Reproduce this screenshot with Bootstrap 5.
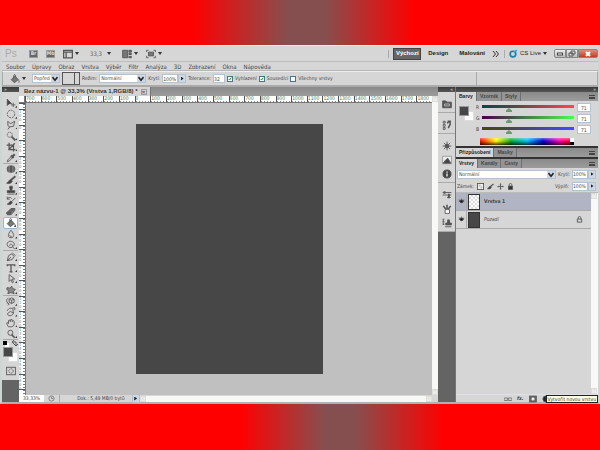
<!DOCTYPE html>
<html lang="cs">
<head>
<meta charset="utf-8">
<meta name="viewport" content="width=device-width, initial-scale=1">
<title>Bez názvu-1</title>
<link href="https://cdn.jsdelivr.net/npm/bootstrap@5.3.0/dist/css/bootstrap.min.css" rel="stylesheet">
<style>
body{font-family:"DejaVu Sans Condensed","DejaVu Sans",sans-serif;font-size:5px;line-height:7px;color:#444;background:#f00}
button,input,select{font:inherit;color:inherit;border:0;padding:0;margin:0;background:none;border-radius:0}
button{display:flex;align-items:center;justify-content:center}
a{color:inherit;text-decoration:none}
svg{display:block;flex:none}
.fill{min-width:0}
.g2{gap:2px}
.ic{width:10px;height:10px;fill:none;stroke:#555;stroke-width:1.4}
.ic-s{width:7px;height:7px}
.caret-dn{width:4px;height:3px;background:#333;clip-path:polygon(0 0,100% 0,50% 100%)}
.band{height:45px;background:linear-gradient(90deg,#f00 32%,#864f4f 48%,#864f4f 54%,#f00 69%)}
.band-b{height:46px;background:linear-gradient(90deg,#f00 40%,#864f4f 54%,#864f4f 59%,#f00 74%)}
.shell{background:#d6d6d6;border:2px solid #d0d4d4;border-top:1px solid #ececec;border-bottom:2px solid #a9b5b5}
.bar-title{height:16px;font-size:6px;border-bottom:1px solid #bdbdbd}
.ps{font-family:"Liberation Sans",sans-serif;font-size:10px;color:#aaa;width:23px;padding-left:3px}
.bx{width:9px;height:8px;background:#666;color:#ddd;font-size:5px;font-weight:bold;border:1px solid #999}
.t-tools{gap:8px}
.zoomlvl{margin:0 3px;gap:5px;color:#666}
.spaces{font-family:"Liberation Sans",sans-serif;font-weight:bold;color:#222}
.spaces .flat{margin-left:7px}
.space-on{background:#666;color:#fff;height:12px;width:28px;border:1px solid #444}
.vline{width:1px;align-self:stretch;margin:2px 0;background:#aaa}
.wbtn{height:9px;border:1px solid #888;background:linear-gradient(#eee,#bbb)}
.w1{width:12px;border-radius:2px 0 0 2px;margin-left:7px}.w2{width:12px}.w3{width:20px;background:linear-gradient(#e58b78,#c53c20);border-radius:0 2px 2px 0}
.bar-menu{height:9px;font-size:6px;gap:7px;padding-left:4px;border-bottom:1px solid #b5b5b5}
.bar-opt{height:16px;border:1px solid #aaa;border-top-color:#eee;border-bottom:2px solid #aaa;gap:2px;padding-left:7px}
.optend{width:118px}
.field{background:#fff;border:1px solid #b4c2cf;height:9px;color:#2e4f4a;line-height:7px}
.pick{appearance:none;padding:0 9px 0 1px;background:#fff url("data:image/svg+xml,%3Csvg xmlns='http://www.w3.org/2000/svg' viewBox='0 0 8 8'%3E%3Crect width='8' height='8' fill='%23ccd8e6'/%3E%3Cpath d='M1.5 2.5 4 5.5 6.500 2.500' fill='none' stroke='%23222' stroke-width='1.500'/%3E%3C/svg%3E") no-repeat right center/8px 8px}
.w28{width:28px}.w47{width:47px}.w17{width:16px}.w12{width:12px}
.step{width:8px;height:9px;background:#ccd8e6;border:1px solid #b4c2cf}
.step::after{content:"";width:3px;height:4px;background:#222;clip-path:polygon(0 0,100% 50%,0 100%)}
.tick{appearance:none;width:6px;height:6px;border:1px solid #4d7185;background:#fff}
.tick:checked{background:#fff url("data:image/svg+xml,%3Csvg xmlns='http://www.w3.org/2000/svg' viewBox='0 0 6 6'%3E%3Cpath d='M1 3 2.500 4.500 5 1' fill='none' stroke='%231a9a2a' stroke-width='1.500'/%3E%3C/svg%3E") center/4px 4px no-repeat}
.swatch-opt{width:18px;height:13px;border:1px solid #555}
.swatch-opt i{width:5px;border-left:1px solid #555}
.darkcol{background:#646464;width:17px}
.head{height:5px;background:linear-gradient(#3a3a3a,#555);color:#ddd;font-size:5px;line-height:4px;padding:0 2px}
.toolbox{height:288px;background:#d6d6d6;padding:6px 1px 0}
.tg{border-bottom:1px solid #aaa}
.tg button{flex:1;width:15px;position:relative;min-height:0}
.tg button::after{content:"";position:absolute;right:1px;bottom:1px;width:2px;height:2px;background:#333;clip-path:polygon(100% 0,100% 100%,0 100%)}
.tg .on{background:#fff;border:1px solid #9fb4c4;border-radius:2px}
.tg1{height:66px}.tg2{height:87px}.tg3{height:45px}.tg4{height:44px}
.fgbg{width:15px;height:15px;display:grid;grid-template:repeat(3,5px)/repeat(3,5px)}
.fgbg i{border:1px solid #999}
.fgbg .fg{grid-area:1/1/3/3;background:#474747;z-index:1}
.fgbg .bgc{grid-area:2/2/4/4;background:#fff;border-color:#ddd}
.tabstrip{background:linear-gradient(#8a8a8a,#9c9c9c)}
.doctabs{height:9px}
.doctab{background:#d3d3d3;font-family:"Liberation Sans",sans-serif;font-size:6px;font-weight:bold;padding:0 3px 0 5px;gap:3px;color:#333;border-right:1px solid #777}
.closebx{width:6px;height:6px;border:1px solid #999;line-height:4px;color:#555}
.rh{height:7px;background:#fff;border-bottom:1px solid #777}
.corner{width:6px;border-right:1px solid #777}
.rh span{flex:1 1 0;min-width:0;border-left:1px solid #555;color:#4c7a55;line-height:5px;overflow:hidden;background:repeating-linear-gradient(90deg,#888 0 1px,transparent 1px 3px) left bottom/100% 1px no-repeat}
.rv{width:7px;background:#fff;border-right:1px solid #777;font-size:4px}
.rv span{flex:1 1 0;min-height:0;border-top:1px solid #555;color:#4c8a70;line-height:4px;width:6px;overflow:hidden;word-break:break-all;background:repeating-linear-gradient(#777 0 1px,transparent 1px 3px) right top/2px 100% no-repeat}
.rv b{font-weight:normal;width:3px;display:block}
.rv .part{flex:0 0 6px}
.stage{background:#c0c0c0}
.paper{width:187px;height:250px;background:#474747}
.sbar{background:#f8f8f6;color:#bbb}
.sv{width:6px}.sv2{width:7px}
.sbtn{width:6px;height:6px;background:#eeede5;border:1px solid #ddd;color:#bbb}
.stat{height:7px}
.doksize{margin:0 7px 0 17px}
.dg{border-bottom:1px solid #aaa;padding-top:5px;padding-bottom:1px}
.dg button{height:14px;width:17px}
.dock{background:#d6d6d6;height:139px}
.panels{width:143px;background:#d6d6d6;border-left:1px solid #777}
.ptabs{height:9px;font-family:"Liberation Sans",sans-serif;font-weight:bold}
.ptabs button{padding:0 3px;color:#444;background:#949494;border-right:1px solid #707070}
.ptabs .on{background:#d6d6d6;color:#222}
.gapline{border-top:2px solid #333}
.pm{width:6px;height:4px;border-top:1px solid #444;border-bottom:1px solid #444;background:linear-gradient(transparent 1px,#444 1px)}
.colorp{height:45px;padding:1px 7px 0 3px;gap:2px}
.crow{height:11px;gap:3px}
.crow label{width:3px}
.crow input[type=range]{appearance:none;height:9px;width:0;min-width:0}
.crow input::-webkit-slider-runnable-track{height:9px;background:var(--g) top 2px left 0/100% 3px no-repeat}
.crow input::-webkit-slider-thumb{appearance:none;width:6px;height:4px;margin-top:5px;background:#6a9a6e;clip-path:polygon(50% 0,100% 60%,100% 100%,0 100%,0 60%)}
.red{--g:linear-gradient(90deg,#004747,#474747 28%,#ff4747)}
.grn{--g:linear-gradient(90deg,#470047,#474747 28%,#47ff47)}
.blu{--g:linear-gradient(90deg,#474700,#474747 28%,#4747ff)}
.val{width:14px;padding-left:3px}
.spec{height:7px;margin:3px 17px 0 4px;background:linear-gradient(rgba(255,255,255,.4),transparent 45%,rgba(0,0,0,.75)),linear-gradient(90deg,#f00,#ff0 17%,#0a3 33%,#0bf 50%,#00c 67%,#f0a 84%,#f00)}
.spec i{display:block;width:4px;height:7px;margin-left:auto;background:linear-gradient(#fff 50%,#000 50%)}
.prow{height:12px;padding:0 2px 0 1px;gap:2px}
.lk{gap:3px}
.layers{border-top:1px solid #bbb}
.lay{height:18px;border-bottom:1px solid #aaa}
.lay.on{background:#b1b4c2}
.lay .eye{width:11px;height:17px;border-right:1px solid #aaa}
.thumb{width:12px;height:16px;margin:0 4px 0 1px;border:1px solid #333;background:#474747}
.checker{background:conic-gradient(#ddd 25%,#fff 0 50%,#ddd 0 75%,#fff 0) 0 0/4px 4px}
.foot{height:8px;padding-left:48px;gap:5px}
.foot .ic{width:8px;height:8px}
.tip{position:absolute;right:0;bottom:-1px;background:#ffffe1;border:1px solid #222;color:#333;line-height:6px;padding:0 1px;white-space:nowrap}
</style>
</head>
<body class="d-flex flex-column min-vh-100">
<svg width="0" height="0" class="position-absolute" aria-hidden="true">
<symbol id="move" viewBox="0 0 16 16"><path d="M2 2v10l3-3h4z" fill="#444"/><path d="M8 11h7M11.500 7.500v7"/></symbol>
<symbol id="ell" viewBox="0 0 16 16"><circle cx="8" cy="8" r="6" stroke-dasharray="3 1.500"/></symbol>
<symbol id="lasso" viewBox="0 0 16 16"><path d="M3 2l4 4 7-4-2 8-6 1-3-2zM6 11l-3 4"/></symbol>
<symbol id="wand" viewBox="0 0 16 16"><circle cx="6" cy="6" r="4" stroke-dasharray="2 1"/><path d="M9 9l6 6" stroke-width="3"/></symbol>
<symbol id="crop" viewBox="0 0 16 16"><path d="M5 1v11h10M1 5h11v10M4 13L14 2" stroke-width="2"/></symbol>
<symbol id="drop" viewBox="0 0 16 16"><path d="M2 14l1-3 6-6 2 2-6 6z"/><path d="M8 4l4 4M10 6l4-4" stroke-width="3.500"/></symbol>
<symbol id="patch" viewBox="0 0 16 16"><rect x="2" y="3" width="12" height="10" rx="4" fill="#555"/><path d="M5 3v10M11 3v10" stroke="#999"/></symbol>
<symbol id="brush" viewBox="0 0 16 16"><path d="M15 2L8 8" stroke-width="3"/><path d="M8 7l2 3c-2 4-5 4-9 3 3-1 3-5 7-6z" fill="#444"/></symbol>
<symbol id="stamp" viewBox="0 0 16 16"><path d="M6 2h4v3L9 9h5v3H2V9h5L6 5z" fill="#444"/><path d="M2 14.500h12"/></symbol>
<symbol id="hist" viewBox="0 0 16 16"><path d="M15 3l-6 6M2 5c2-4 6-3 7-1M2 1v4h4"/><path d="M8 8l2 2c-1 4-4 4-8 3 3-1 3-4 6-5z" fill="#444"/></symbol>
<symbol id="eraser" viewBox="0 0 16 16"><path d="M1 11l7-7h6l-6 7zM1 11h7v3H2zM8 14l6-7V4" fill="#666"/></symbol>
<symbol id="bucket" viewBox="0 0 16 16"><path d="M2 9l6-6 5 6-6 5z" fill="#777"/><path d="M6 7V2c1-2 3-1 3 1M13 9c2 1 2 4 1 5"/></symbol>
<symbol id="water" viewBox="0 0 16 16"><path d="M8 2c6 7 5 12 0 12S2 9 8 2z"/><path d="M6 10c0 2 2 2 3 2"/></symbol>
<symbol id="dodge" viewBox="0 0 16 16"><path d="M12 10c3-4 0-8-5-8S0 8 4 11s8 0 6-3-5 0-4 1M10 11l4 3"/></symbol>
<symbol id="pen" viewBox="0 0 16 16"><path d="M2 14l2-8 5-3 4 4-3 5zM2 14l6-6M10 1l5 5"/></symbol>
<symbol id="type" viewBox="0 0 16 16"><path d="M2 5V3h12v2M8 3v11M5.500 14h5" stroke-width="2"/></symbol>
<symbol id="arrow" viewBox="0 0 16 16"><path d="M5 1v11l3-3 2 5 2-1-2-5h4z"/></symbol>
<symbol id="shape" viewBox="0 0 16 16"><path d="M2 4l4 1 3-3 2 4 4 1-3 3 1 4-5-2-5 2 1-5-3-2z" fill="#888"/></symbol>
<symbol id="rot" viewBox="0 0 16 16"><path d="M5 5l4-2 4 2v5l-4 2-4-2zM5 5l4 2 4-2M9 7v5M4 3C-1 6 1 11 5 13l-2 2M5 13l-3-2"/></symbol>
<symbol id="orb" viewBox="0 0 16 16"><path d="M2 6c2-5 8-5 9-2l1 6c-3 6-9 4-10 1M10 2l4-1v4M2 11l5-4 5 3"/></symbol>
<symbol id="hand" viewBox="0 0 16 16"><path d="M4 14C1 11 1 8 2 7l2 2V4l2-1 1 3 1-4 2 1v3l2-2 1 1c1 5-1 9-4 9z"/></symbol>
<symbol id="zoom" viewBox="0 0 16 16"><circle cx="7" cy="6" r="4"/><path d="M9 9l5 5" stroke-width="2.500"/></symbol>
<symbol id="mask" viewBox="0 0 16 16"><rect x="1" y="2" width="14" height="12"/><circle cx="8" cy="8" r="3.500" stroke-dasharray="2 1"/></symbol>
<symbol id="newmask" viewBox="0 0 16 16"><rect x="1" y="2" width="14" height="12" fill="#666"/><circle cx="8" cy="8" r="4" fill="#eee"/></symbol>
<symbol id="half" viewBox="0 0 16 16"><circle cx="8" cy="8" r="6"/><path d="M8 2a6 6 0 0 0 0 12z" fill="#222"/></symbol>
<symbol id="folder" viewBox="0 0 16 16"><path d="M1 3h5l2 2h7v9H1z" fill="#555"/><path d="M4 8h8v3H4z" stroke="#bbb"/></symbol>
<symbol id="history" viewBox="0 0 16 16"><path d="M2 2h3v3H2zM2 7h3v3H2zM2 12h3v3H2z"/><path d="M9 2h4v5l-3 6M8 5l4-3" stroke-width="2.500"/></symbol>
<symbol id="wheel" viewBox="0 0 16 16"><path d="M8 1v14M1 8h14M3 3l10 10M13 3L3 13"/><circle cx="8" cy="8" r="3" fill="#555"/></symbol>
<symbol id="mount" viewBox="0 0 16 16"><rect x="1" y="2" width="14" height="12" fill="#eee" stroke="#999"/><path d="M2 13l3-4 4-4 2 3 3 5z" fill="#444"/></symbol>
<symbol id="info" viewBox="0 0 16 16"><circle cx="8" cy="8" r="6.500" fill="#444"/><path d="M8 7v5M8 4v2" stroke="#fff" stroke-width="2"/></symbol>
<symbol id="slid" viewBox="0 0 16 16"><path d="M1 4h14M1 8h14M8 12h6" /><path d="M4 2v4M11 6v7" stroke-width="3"/></symbol>
<symbol id="cup" viewBox="0 0 16 16"><path d="M5 9h7v6H5z" fill="#fff"/><path d="M6 8L2 3M8 8V1M10 8l4-5" stroke-width="2.500"/></symbol>
<symbol id="clone" viewBox="0 0 16 16"><path d="M9 3h3v5h3v3H6V8h3zM5 14h10" fill="#555"/><path d="M1 2h3M1 6h3M1 10h3M2 2v9"/></symbol>
<symbol id="eye" viewBox="0 0 16 16"><path d="M2 7c4-4 8-4 12 0-3 4-9 4-12 0z" fill="#555"/><circle cx="8" cy="8" r="3" fill="#111"/><path d="M2 3l2 2M8 1v3M14 3l-2 2"/></symbol>
<symbol id="lock" viewBox="0 0 16 16"><rect x="3" y="7" width="10" height="8" fill="#333"/><path d="M5 7V4c0-4 6-4 6 0v3" stroke-width="2"/></symbol>
<symbol id="lock-o" viewBox="0 0 16 16"><path d="M3 7h10v7H3zM5 7V4c0-4 6-4 6 0v3" stroke-width="2"/></symbol>
<symbol id="grid" viewBox="0 0 16 16"><rect x="1" y="1" width="14" height="14" fill="#eee" stroke-width="2"/><path d="M4 4h4v4H4zM8 8h4v4H8z" fill="#bbb" stroke="none"/></symbol>
<symbol id="cross" viewBox="0 0 16 16"><path d="M8 1v14M1 8h14" stroke-width="2"/><path d="M6 3h4M6 13h4M3 6v4M13 6v4"/></symbol>
<symbol id="view" viewBox="0 0 16 16"><path d="M1 2h14v12H1zM1 5h14M5 5v9" stroke-width="2"/></symbol>
<symbol id="arr" viewBox="0 0 16 16"><path d="M1 2h8v12H1z" fill="#777"/><path d="M11 2h4v3h-4zM11 7h4v2h-4zM11 12h4v2h-4z" fill="#666"/></symbol>
<symbol id="screen" viewBox="0 0 16 16"><path d="M4 5h8v6H4z" fill="#777"/><path d="M1 5V2h3M12 2h3v3M15 11v3h-3M4 14H1v-3"/></symbol>
<symbol id="link" viewBox="0 0 16 16"><rect x="0" y="6" width="8" height="5" rx="2"/><rect x="8" y="6" width="8" height="5" rx="2"/></symbol>
<symbol id="clock" viewBox="0 0 16 16"><circle cx="8" cy="8" r="6"/><path d="M8 4v4h4"/></symbol>
</svg>

<div class="band"></div>
<main class="shell flex-grow-1 d-flex flex-column">
 <header class="bar-title d-flex align-items-center">
  <span class="ps">Ps</span>
  <div class="d-flex align-items-center t-tools ms-1">
   <button class="bx">Br</button><button class="bx">Mb</button>
   <button class="g2" aria-label="Zobrazit"><svg class="ic"><use href="#view"/></svg><i class="caret-dn"></i></button>
   <button class="zoomlvl"><span>33,3</span><i class="caret-dn"></i></button>
   <button class="g2" aria-label="Uspořádat"><svg class="ic"><use href="#arr"/></svg><i class="caret-dn"></i></button>
   <button class="g2" aria-label="Režim obrazovky"><svg class="ic"><use href="#screen"/></svg><i class="caret-dn"></i></button>
  </div>
  <div class="d-flex align-items-center ms-auto spaces">
   <i class="vline me-1"></i>
   <button class="space-on">Výchozí</button>
   <button class="flat">Design</button>
   <button class="flat ps-1">Malování</button>
   <button class="flat" aria-label="Další"><svg width="8" height="8" viewBox="0 0 16 16" fill="none" stroke="#333" stroke-width="2"><path d="M2 2l5 6-5 6M8 2l5 6-5 6"/></svg></button>
   <i class="vline mx-1"></i>
   <button class="fw-normal g2"><svg width="9" height="9" viewBox="0 0 16 16" fill="none" stroke="#1683ad" stroke-width="3"><circle cx="7" cy="9" r="5"/><path d="M9 6l5-4" stroke="#35a5cc"/></svg><span>CS Live</span><i class="caret-dn"></i></button>
   <button class="wbtn w1" aria-label="Minimalizovat"><svg width="6" height="4" viewBox="0 0 6 4"><rect x=".5" y="1" width="5" height="2" fill="#fff" stroke="#444"/></svg></button>
   <button class="wbtn w2" aria-label="Obnovit"><svg width="8" height="7" viewBox="0 0 8 7" fill="#ddd" stroke="#555"><path d="M3 1h4v3H3zM1 3h4v3H1z"/></svg></button>
   <button class="wbtn w3" aria-label="Zavřít"><svg width="6" height="6" viewBox="0 0 6 6" stroke="#fff" stroke-width="2"><path d="M1 1l4 4M5 1L1 5"/></svg></button>
  </div>
 </header>
 <nav class="bar-menu d-flex align-items-center"><a href="#">Soubor</a><a href="#">Úpravy</a><a href="#">Obraz</a><a href="#">Vrstva</a><a href="#">Výběr</a><a href="#">Filtr</a><a href="#">Analýza</a><a href="#">3D</a><a href="#">Zobrazení</a><a href="#">Okna</a><a href="#">Nápověda</a></nav>
 <div class="bar-opt d-flex align-items-center">
  <button class="g2 me-1" aria-label="Plechovka"><svg class="ic"><use href="#bucket"/></svg><i class="caret-dn"></i></button>
  <select class="field pick w28" aria-label="Výplň"><option>Popředí</option></select>
  <button class="swatch-opt justify-content-end align-items-stretch" aria-label="Vzorek"><i></i></button>
  <label for="mode">Režim:</label><select id="mode" class="field pick w47"><option>Normální</option></select>
  <label for="op">Krytí:</label><div class="d-flex"><input id="op" class="field w17" value="100%"><button class="step" aria-label="Krytí"></button></div>
  <label for="tol">Tolerance:</label><input id="tol" class="field w12" value="32">
  <input type="checkbox" class="tick" id="c1" checked><label for="c1">Vyhlazení</label>
  <input type="checkbox" class="tick" id="c2" checked><label for="c2">Sousedící</label>
  <input type="checkbox" class="tick" id="c3"><label for="c3">Všechny vrstvy</label>
  <i class="vline ms-auto my-0"></i><i class="optend"></i>
 </div>
 <div class="d-flex flex-grow-1">
  <aside class="darkcol">
   <div class="head">»</div>
   <div class="toolbox d-flex flex-column align-items-center">
    <div class="tg tg1 d-flex flex-column" data-tools="move ell lasso wand crop drop"></div>
    <div class="tg tg2 d-flex flex-column" data-tools="patch brush stamp hist eraser bucket water dodge" data-on="bucket"></div>
    <div class="tg tg3 d-flex flex-column" data-tools="pen type arrow shape"></div>
    <div class="tg tg4 d-flex flex-column" data-tools="rot orb hand zoom"></div>
    <button class="w-100 justify-content-between" aria-label="Výchozí barvy"><svg width="6" height="7" viewBox="0 0 6 7"><path d="M2 3h4v4H2z" fill="#fff"/><path d="M0 1h4v4H0z"/></svg><svg width="6" height="7" viewBox="0 0 6 7" fill="none" stroke="#555"><path d="M0 2h4v4M2 0L0 2l2 2M2 4l2 2 2-2"/></svg></button>
    <div class="fgbg"><i class="fg"></i><i class="bgc"></i></div>
    <button class="mt-1" aria-label="Rychlá maska"><svg class="ic"><use href="#mask"/></svg></button>
   </div>
  </aside>
  <section class="flex-grow-1 d-flex flex-column fill">
   <div class="doctabs tabstrip d-flex"><div class="doctab d-flex align-items-center"><span>Bez názvu-1 @ 33,3% (Vrstva 1,RGB/8) *</span><button class="closebx" aria-label="Zavřít">×</button></div></div>
   <div class="d-flex flex-grow-1">
    <div class="flex-grow-1 d-flex flex-column fill">
     <div class="rh d-flex" id="rh"><i class="corner"></i></div>
     <div class="d-flex flex-grow-1">
      <div class="rv d-flex flex-column" id="rv"></div>
      <div class="stage flex-grow-1 d-flex align-items-center justify-content-center"><div class="paper"></div></div>
     </div>
    </div>
    <div class="sbar sv d-flex flex-column justify-content-between"><button class="sbtn" aria-label="Nahoru">˄</button><button class="sbtn" aria-label="Dolů">˅</button></div>
   </div>
   <div class="stat d-flex align-items-center">
    <span class="bg-white ps-1 pe-1">33,33%</span><svg class="ic ic-s mx-1"><use href="#clock"/></svg>
    <i class="vline my-0"></i><span class="doksize">Dok.: 5,49 MB/0 bytů</span>
    <button class="step" aria-label="Stav"></button>
    <div class="sbar flex-grow-1 d-flex justify-content-between"><button class="sbtn" aria-label="Vlevo">‹</button><button class="sbtn" aria-label="Vpravo">›</button></div><i class="sv"></i>
   </div>
  </section>
  <aside class="darkcol">
   <div class="head text-end">«</div>
   <div class="dock">
    <div class="dg" data-tools="folder"></div><div class="dg" data-tools="history"></div>
    <div class="dg" data-tools="wheel mount info"></div><div class="dg" data-tools="slid cup clone"></div>
   </div>
  </aside>
  <aside class="panels d-flex flex-column position-relative">
   <div class="head text-end">»</div>
   <div class="ptabs tabstrip d-flex"><button class="on">Barvy</button><button>Vzorník</button><button>Styly</button><button class="ms-auto border-0 bg-transparent" aria-label="Nabídka"><i class="pm"></i></button></div>
   <div class="colorp d-flex">
    <div class="fgbg mt-1 flex-shrink-0"><i class="fg"></i><i class="bgc"></i></div>
    <div class="flex-grow-1 fill">
     <div class="crow d-flex align-items-center"><label for="r">R</label><input id="r" type="range" max="255" value="71" class="red flex-grow-1"><input class="field val" value="71" aria-label="R"></div>
     <div class="crow d-flex align-items-center"><label for="g">G</label><input id="g" type="range" max="255" value="71" class="grn flex-grow-1"><input class="field val" value="71" aria-label="G"></div>
     <div class="crow d-flex align-items-center"><label for="b">B</label><input id="b" type="range" max="255" value="71" class="blu flex-grow-1"><input class="field val" value="71" aria-label="B"></div>
     <div class="spec"><i></i></div>
    </div>
   </div>
   <div class="gapline"></div>
   <div class="ptabs tabstrip d-flex"><button class="on">Přizpůsobení</button><button>Masky</button><button class="ms-auto border-0 bg-transparent" aria-label="Nabídka"><i class="pm"></i></button></div>
   <div class="gapline"></div>
   <div class="ptabs tabstrip d-flex"><button class="on">Vrstvy</button><button>Kanály</button><button>Cesty</button><button class="ms-auto border-0 bg-transparent" aria-label="Nabídka"><i class="pm"></i></button></div>
   <div class="prow d-flex align-items-center"><select class="field pick flex-grow-1" aria-label="Režim prolnutí"><option>Normální</option></select><label for="lo">Krytí:</label><div class="d-flex"><input id="lo" class="field w17" value="100%"><button class="step" aria-label="Krytí"></button></div></div>
   <div class="prow lk d-flex align-items-center"><span>Zámek:</span><button aria-label="Průhlednost"><svg class="ic ic-s"><use href="#grid"/></svg></button><button aria-label="Obraz"><svg class="ic ic-s"><use href="#brush"/></svg></button><button aria-label="Poloha"><svg class="ic ic-s"><use href="#cross"/></svg></button><button aria-label="Vše"><svg class="ic ic-s"><use href="#lock"/></svg></button><label for="fi" class="ms-auto">Výplň:</label><div class="d-flex"><input id="fi" class="field w17" value="100%"><button class="step" aria-label="Výplň"></button></div></div>
   <div class="layers d-flex flex-grow-1">
    <div class="flex-grow-1">
     <div class="lay on d-flex align-items-center"><button class="eye" aria-label="Viditelnost"><svg class="ic ic-s"><use href="#eye"/></svg></button><i class="thumb checker"></i><b>Vrstva 1</b></div>
     <div class="lay d-flex align-items-center"><button class="eye" aria-label="Viditelnost"><svg class="ic ic-s"><use href="#eye"/></svg></button><i class="thumb"></i><em>Pozadí</em><svg class="ic ic-s ms-auto me-2"><use href="#lock-o"/></svg></div>
    </div>
    <div class="sbar sv2 d-flex flex-column justify-content-between"><button class="sbtn" aria-label="Nahoru">˄</button><button class="sbtn" aria-label="Dolů">˅</button></div>
   </div>
   <div class="foot d-flex align-items-center border-top"><svg class="ic"><use href="#link"/></svg><b class="fst-italic">fx.</b><svg class="ic"><use href="#newmask"/></svg><svg class="ic"><use href="#half"/></svg></div>
   <div class="tip" role="tooltip">Vytvořit novou vrstvu</div>
  </aside>
 </div>
</main>
<div class="band-b"></div>
<script src="https://cdn.jsdelivr.net/npm/bootstrap@5.3.0/dist/js/bootstrap.bundle.min.js"></script>
<script>
document.querySelectorAll('[data-tools]').forEach(g => {
  g.innerHTML = g.dataset.tools.split(' ').map(t => `<button class="${g.dataset.on === t ? 'on' : ''}" aria-label="${t}"><svg class="ic"><use href="#${t}"/></svg></button>`).join('');
});
const rh = document.getElementById('rh'), rv = document.getElementById('rv');
for (let n = -7; n <= 18; n++) rh.insertAdjacentHTML('beforeend', `<span>${Math.abs(n * 100)}</span>`);
rv.insertAdjacentHTML('beforeend', '<span class="part"></span>');
for (let n = -1; n <= 16; n++) rv.insertAdjacentHTML('beforeend', `<span><b>${[...String(Math.abs(n * 100))].join(' ')}</b></span>`);
rv.insertAdjacentHTML('beforeend', '<span class="part"></span>');
</script>
</body>
</html>
